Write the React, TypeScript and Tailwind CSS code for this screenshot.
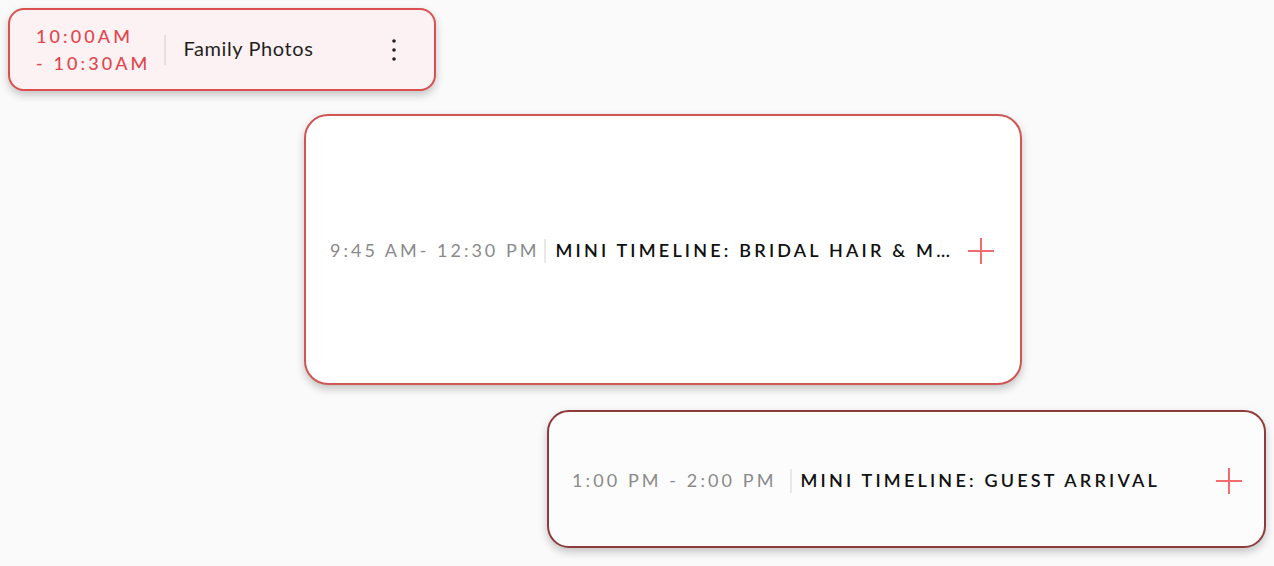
import React from "react";

const font = { fontFamily: "Lato, 'Noto Sans', sans-serif" };

function Plus() {
  return (
    <svg width="28" height="28" viewBox="0 0 28 28" className="shrink-0">
      <path d="M14 1v26M1 14h26" stroke="#f26b6e" strokeWidth="2" />
    </svg>
  );
}

export default function App() {
  return (
    <div className="min-h-[566px] w-full bg-[#fafafa] flex flex-col items-start" style={font}>
      <div className="ml-[8px] mt-[8px] w-[428px] h-[83px] rounded-[16px] border-2 border-[#d9504f] bg-[#fdf2f3] shadow-[0_4px_8px_rgba(0,0,0,0.22)] flex items-center pl-[26px] pr-[37px]">
        <div className="text-[18px] leading-[27px] tracking-[3.1px] text-[#e0474c] font-medium">
          <div>10:00AM</div>
          <div>- 10:30AM</div>
        </div>
        <div className="ml-[13px] w-[2px] h-[30px] bg-[#e6e0e0]" />
        <div className="ml-[18px] flex-1 text-[20px] tracking-[0.6px] text-[#1f1f1f] pb-[3px]">Family Photos</div>
        <svg width="6" height="24" viewBox="0 0 6 24">
          <circle cx="3" cy="3" r="1.8" fill="#222" />
          <circle cx="3" cy="12" r="1.8" fill="#222" />
          <circle cx="3" cy="21" r="1.8" fill="#222" />
        </svg>
      </div>

      <div className="ml-[304px] mt-[23px] w-[718px] h-[271px] rounded-[24px] border-2 border-[#cf5753] bg-white shadow-[0_4px_8px_rgba(0,0,0,0.22)] flex items-center pl-[24px] pr-[25px] pt-[2px]">
        <div className="whitespace-nowrap text-[18px] tracking-[3px] text-[#8a8a8a]">9:45 AM- 12:30 PM</div>
        <div className="ml-[5px] w-[2px] h-[24px] bg-[#e8e8e8]" />
        <div className="ml-[9px] flex-1 min-w-0 truncate text-[18px] tracking-[3.2px] font-semibold text-[#111]">
          MINI TIMELINE: BRIDAL HAIR &amp; MAKEUP
        </div>
        <div className="ml-[8px]">
          <Plus />
        </div>
      </div>

      <div className="ml-[547px] mt-[25px] w-[719px] h-[138px] rounded-[22px] border-2 border-[#8e3b3b] bg-[#fcfcfc] shadow-[0_4px_8px_rgba(0,0,0,0.22)] flex items-center pl-[23px] pr-[21px] pt-[3px]">
        <div className="whitespace-nowrap text-[18px] tracking-[3.1px] text-[#8a8a8a]">1:00 PM - 2:00 PM</div>
        <div className="ml-[13px] w-[2px] h-[24px] bg-[#e8e8e8]" />
        <div className="ml-[9px] flex-1 min-w-0 truncate text-[18px] tracking-[3.2px] font-semibold text-[#111]">
          MINI TIMELINE: GUEST ARRIVAL
        </div>
        <div className="ml-[18px]">
          <Plus />
        </div>
      </div>
    </div>
  );
}
